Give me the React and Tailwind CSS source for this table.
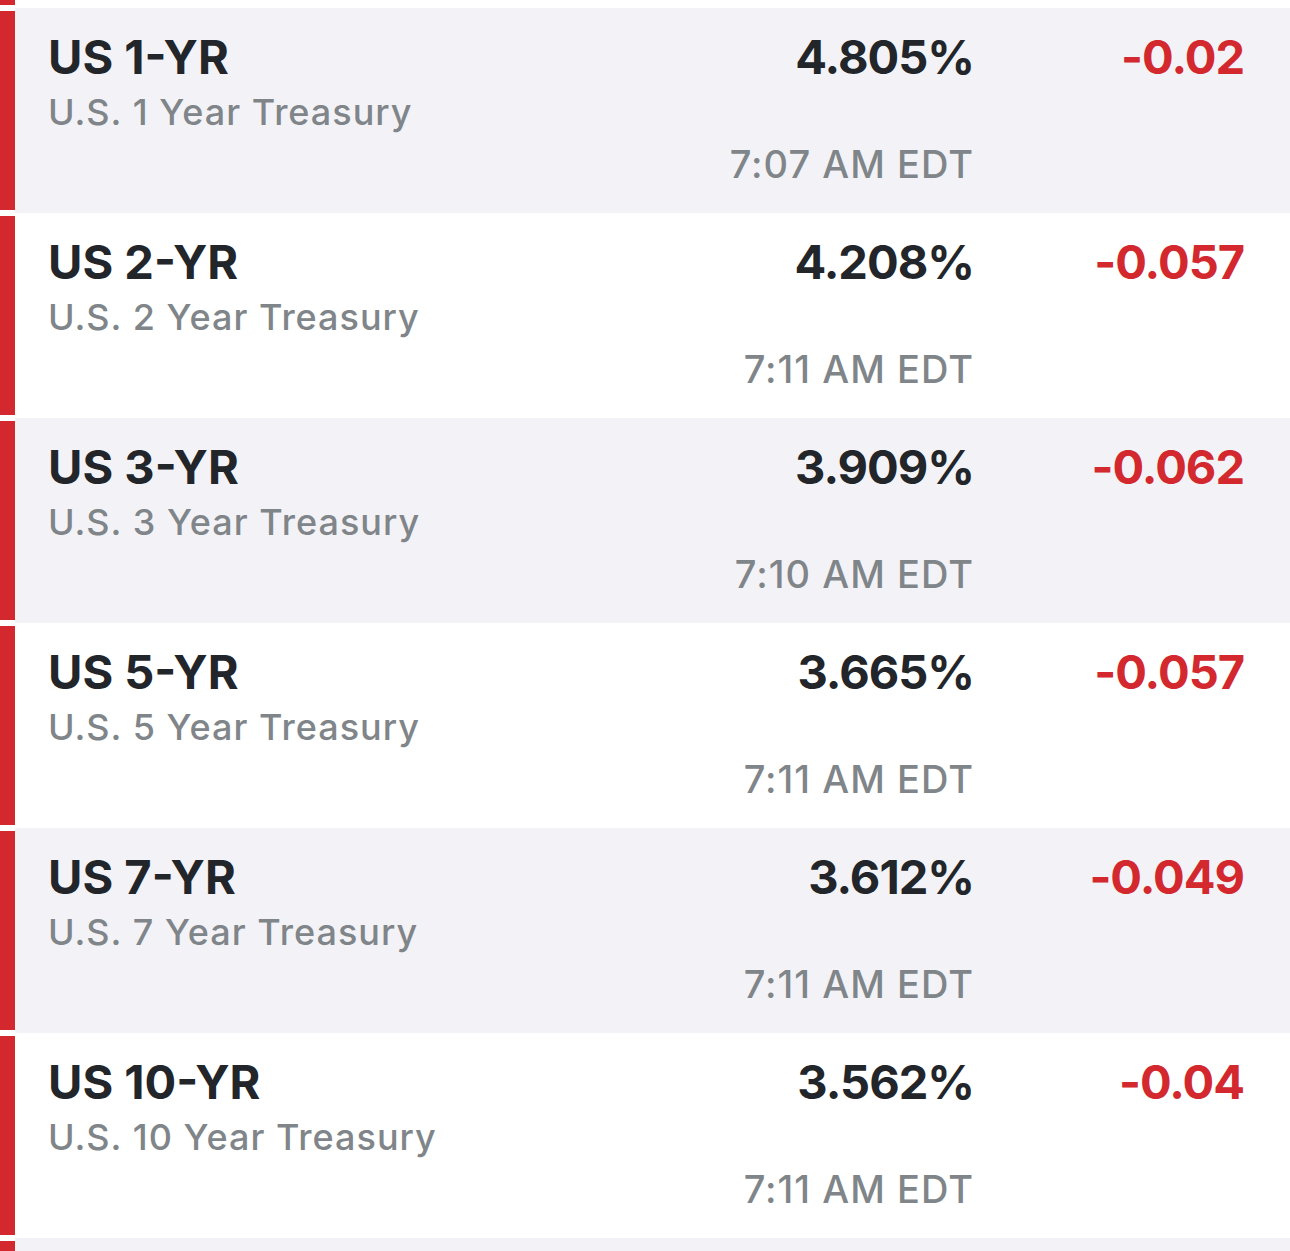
import React from 'react';

const rows = [
  { sym: 'US 1-YR', name: 'U.S. 1 Year Treasury', price: '4.805%', change: '-0.02', time: '7:07 AM EDT' },
  { sym: 'US 2-YR', name: 'U.S. 2 Year Treasury', price: '4.208%', change: '-0.057', time: '7:11 AM EDT' },
  { sym: 'US 3-YR', name: 'U.S. 3 Year Treasury', price: '3.909%', change: '-0.062', time: '7:10 AM EDT' },
  { sym: 'US 5-YR', name: 'U.S. 5 Year Treasury', price: '3.665%', change: '-0.057', time: '7:11 AM EDT' },
  { sym: 'US 7-YR', name: 'U.S. 7 Year Treasury', price: '3.612%', change: '-0.049', time: '7:11 AM EDT' },
  { sym: 'US 10-YR', name: 'U.S. 10 Year Treasury', price: '3.562%', change: '-0.04', time: '7:11 AM EDT' },
];

const font = { fontFamily: 'Inter, Lato, sans-serif' };

const Row = ({ row, shaded }) => (
  <div className="flex h-[205px]">
    <div className="w-[15px] py-[3px] bg-white">
      <div className="h-full bg-[#d2282e]" />
    </div>
    <div className={`flex-1 flex pl-[33px] pr-[46px] pt-[25px] ${shaded ? 'bg-[#f3f3f7]' : 'bg-white'}`}>
      <div className="flex-1 flex flex-col">
        <div className="text-[47px] leading-none font-bold text-[#222529]">{row.sym}</div>
        <div className="mt-[14px] text-[36px] leading-none font-medium tracking-[1px] text-[#808589]">
          {row.name}
        </div>
      </div>
      <div className="flex flex-col items-end mr-[-2px]">
        <div className="text-[47px] leading-none font-bold tracking-[-1px] text-[#222529]">{row.price}</div>
        <div className="mt-[65px] text-[38px] leading-none font-medium tracking-[1px] text-[#808589]">
          {row.time}
        </div>
      </div>
      <div className="w-[272px] text-right text-[47px] leading-none font-bold tracking-[-1px] text-[#d2282e]">
        {row.change}
      </div>
    </div>
  </div>
);

export default function App() {
  return (
    <div className="w-[1290px] h-[1251px] overflow-hidden bg-white" style={font}>
      <div className="flex h-[8px]">
        <div className="w-[15px]">
          <div className="h-[5px] bg-[#d2282e]" />
        </div>
      </div>
      {rows.map((row, i) => (
        <Row key={row.sym} row={row} shaded={i % 2 === 0} />
      ))}
      <div className="flex h-[205px]">
        <div className="w-[15px] pt-[3px] bg-white">
          <div className="h-full bg-[#d2282e]" />
        </div>
        <div className="flex-1 bg-[#f3f3f7]" />
      </div>
    </div>
  );
}
